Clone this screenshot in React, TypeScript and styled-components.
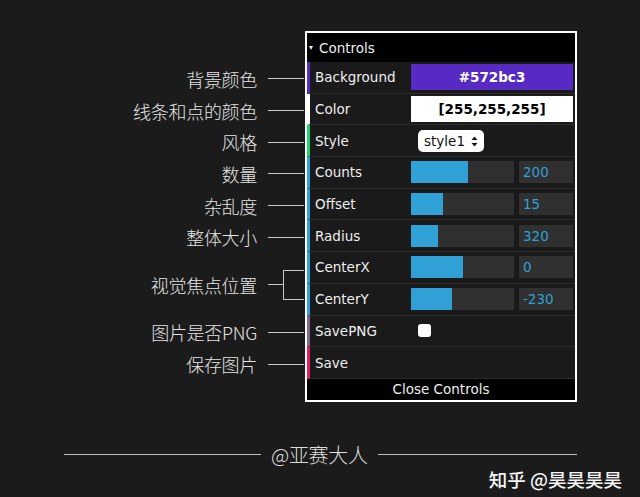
import React from 'react';
import styled, { createGlobalStyle } from 'styled-components';

const GlobalStyle = createGlobalStyle`
  html, body {
    margin: 0;
    padding: 0;
    background: #1b1b1b;
  }
`;

const ROW_H = 31.7;

const Page = styled.div`
  width: 640px;
  height: 497px;
  background: #1b1b1b;
  display: flex;
  flex-direction: column;
  overflow: hidden;
  font-family: "DejaVu Sans", "Noto Sans CJK SC", sans-serif;
`;

const Main = styled.div`
  display: flex;
  padding-top: 31px;
`;

const Annotations = styled.div`
  width: 305px;
  box-sizing: border-box;
  padding-top: 32px;
  padding-right: 1px;
  display: flex;
  flex-direction: column;
`;

const Note = styled.div<{ $rows?: number }>`
  height: ${p => (p.$rows ?? 1) * ROW_H}px;
  display: flex;
  align-items: center;
  justify-content: flex-end;
`;

const NoteText = styled.span`
  font-family: "Noto Sans CJK SC", sans-serif;
  font-size: 18px;
  font-weight: 300;
  color: #e4e4e4;
  letter-spacing: -0.3px;
`;

const NoteLine = styled.span<{ $w: number }>`
  width: ${p => p.$w}px;
  height: 1px;
  background: #c8c8c8;
  margin-left: 11px;
`;

const Bracket = styled.span`
  width: 21px;
  height: 30px;
  border: 1px solid #c8c8c8;
  border-right: none;
  box-sizing: border-box;
`;

const Panel = styled.div`
  width: 272px;
  border: 2px solid #ffffff;
  box-sizing: border-box;
  background: #1a1a1a;
  display: flex;
  flex-direction: column;
  color: #eeeeee;
  font-size: 13.5px;
`;

const Title = styled.div`
  height: 29px;
  background: #000;
  display: flex;
  align-items: center;
  padding-left: 2px;
  gap: 6px;
  box-sizing: border-box;
`;

const Caret = styled.span`
  width: 0;
  height: 0;
  border-left: 2.5px solid transparent;
  border-right: 2.5px solid transparent;
  border-top: 4px solid #eee;
`;

const Row = styled.div<{ $stripe: string }>`
  height: ${ROW_H}px;
  box-sizing: border-box;
  border-left: 3px solid ${p => p.$stripe};
  border-bottom: 1px solid #2c2c2c;
  padding: 0 2px 0 5px;
  display: flex;
  align-items: center;
`;

const Label = styled.span`
  width: 96px;
  flex-shrink: 0;
  white-space: nowrap;
`;

const Control = styled.div`
  width: 162px;
  display: flex;
  align-items: center;
  gap: 5px;
`;

const ColorBox = styled.div<{ $bg: string; $fg: string }>`
  width: 100%;
  height: 26px;
  background: ${p => p.$bg};
  color: ${p => p.$fg};
  font-weight: bold;
  display: flex;
  align-items: center;
  justify-content: center;
`;

const Select = styled.div`
  margin-left: 7px;
  width: 66px;
  height: 22px;
  background: #fff;
  border-radius: 5px;
  color: #111;
  display: flex;
  align-items: center;
  justify-content: center;
  gap: 6px;
  box-sizing: border-box;
  padding-top: 1px;
`;

const Slider = styled.div`
  width: 103px;
  height: 22px;
  background: #303030;
  display: flex;
`;

const Fill = styled.div`
  height: 100%;
  background: #2fa1d6;
`;

const NumberBox = styled.div`
  width: 54px;
  height: 22px;
  background: #303030;
  color: #2fa1d6;
  display: flex;
  align-items: center;
  padding-left: 4px;
  box-sizing: border-box;
`;

const Checkbox = styled.div`
  margin-left: 7px;
  width: 13px;
  height: 13px;
  border-radius: 3px;
  background: #fff;
`;

const CloseBar = styled.div`
  height: 21px;
  background: #000;
  display: flex;
  align-items: center;
  justify-content: center;
`;

const Footer = styled.div`
  margin-top: 42px;
  padding-left: 64px;
  height: 22px;
  display: flex;
  align-items: center;
  gap: 10px;
`;

const FooterLine = styled.span<{ $w: number }>`
  width: ${p => p.$w}px;
  height: 1px;
  background: #bdbdbd;
`;

const FooterText = styled.span`
  font-family: "Noto Sans CJK SC", sans-serif;
  font-size: 20px;
  font-weight: 300;
  color: #dcdcdc;
  letter-spacing: -0.3px;
`;

const Credit = styled.div`
  align-self: flex-end;
  margin-right: 18px;
  font-family: "Noto Sans CJK SC", sans-serif;
  font-size: 18.5px;
  font-weight: 500;
  color: #f4f4f4;
  white-space: pre;
`;

const SelectArrows = () => (
  <svg width="7" height="11" viewBox="0 0 7 11">
    <path d="M3.5 0.5 L6.5 4 L0.5 4 Z M3.5 10.5 L6.5 7 L0.5 7 Z" fill="#111" />
  </svg>
);

const notes: { text: string; rows?: number; bracket?: boolean }[] = [
  { text: '背景颜色' },
  { text: '线条和点的颜色' },
  { text: '风格' },
  { text: '数量' },
  { text: '杂乱度' },
  { text: '整体大小' },
  { text: '视觉焦点位置', rows: 2, bracket: true },
  { text: '图片是否PNG' },
  { text: '保存图片' },
];

const sliders = [
  { name: 'Counts', value: '200', pct: 55 },
  { name: 'Offset', value: '15', pct: 31 },
  { name: 'Radius', value: '320', pct: 26 },
  { name: 'CenterX', value: '0', pct: 50 },
  { name: 'CenterY', value: '-230', pct: 40 },
];

export default function App() {
  return (
    <Page>
      <GlobalStyle />
      <Main>
        <Annotations>
          {notes.map(n => (
            <Note key={n.text} $rows={n.rows}>
              <NoteText>{n.text}</NoteText>
              {n.bracket ? (
                <>
                  <NoteLine $w={15} />
                  <Bracket />
                </>
              ) : (
                <NoteLine $w={36} />
              )}
            </Note>
          ))}
        </Annotations>
        <Panel>
          <Title>
            <Caret />
            <span>Controls</span>
          </Title>
          <Row $stripe="#572bc3">
            <Label>Background</Label>
            <Control>
              <ColorBox $bg="#572bc3" $fg="#ffffff">#572bc3</ColorBox>
            </Control>
          </Row>
          <Row $stripe="#ffffff">
            <Label>Color</Label>
            <Control>
              <ColorBox $bg="#ffffff" $fg="#000000">[255,255,255]</ColorBox>
            </Control>
          </Row>
          <Row $stripe="#1ed36f">
            <Label>Style</Label>
            <Control>
              <Select>
                <span>style1</span>
                <SelectArrows />
              </Select>
            </Control>
          </Row>
          {sliders.map(s => (
            <Row key={s.name} $stripe="#2fa1d6">
              <Label>{s.name}</Label>
              <Control>
                <Slider>
                  <Fill style={{ width: `${s.pct}%` }} />
                </Slider>
                <NumberBox>{s.value}</NumberBox>
              </Control>
            </Row>
          ))}
          <Row $stripe="#806787">
            <Label>SavePNG</Label>
            <Control>
              <Checkbox />
            </Control>
          </Row>
          <Row $stripe="#e61d5f">
            <Label>Save</Label>
          </Row>
          <CloseBar>Close Controls</CloseBar>
        </Panel>
      </Main>
      <Footer>
        <FooterLine $w={197} />
        <FooterText>@亚赛大人</FooterText>
        <FooterLine $w={199} />
      </Footer>
      <Credit>知乎 @昊昊昊昊</Credit>
    </Page>
  );
}
